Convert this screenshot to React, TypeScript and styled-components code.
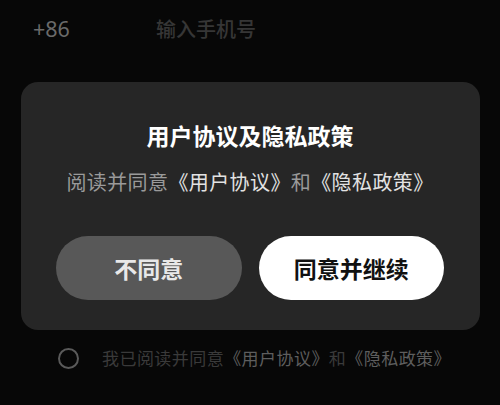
import * as React from 'react';
import styled, { createGlobalStyle } from 'styled-components';

const GlobalStyle = createGlobalStyle`
	html, body {
		margin: 0;
		padding: 0;
		background: #070707;
	}
	body {
		font-family: "Noto Sans CJK SC", "Noto Sans", sans-serif;
	}
`;

const Page = styled.div`
	width: 500px;
	height: 405px;
	background: #070707;
	display: flex;
	flex-direction: column;
	overflow: hidden;
`;

const PhoneRow = styled.div`
	display: flex;
	align-items: center;
	height: 56px;
	padding-left: 33px;
	font-size: 20px;
`;

const AreaCode = styled.span`
	width: 123px;
	color: #6a6a6a;
	font-size: 21.5px;
	font-family: "Noto Sans", sans-serif;
`;

const Placeholder = styled.span`
	color: #363636;
	font-weight: 500;
`;

const Dialog = styled.div`
	margin: 26px 20px 0 21px;
	height: 248px;
	box-sizing: border-box;
	padding: 37px 36px 30px 35px;
	background: #262626;
	border-radius: 17px;
	display: flex;
	flex-direction: column;
	align-items: center;
`;

const Title = styled.div`
	font-size: 23px;
	line-height: 32px;
	font-weight: 700;
	color: #ffffff;
`;

const Subtitle = styled.div`
	margin-top: 17px;
	font-size: 20px;
	line-height: 28px;
	letter-spacing: 0.4px;
	color: #9a9a9a;
`;

const Link = styled.span<{ $dim?: boolean }>`
	color: ${(p) => (p.$dim ? '#5e5e5e' : '#e2e2e2')};
`;

const Buttons = styled.div`
	margin-top: 40px;
	display: flex;
	gap: 17px;
	width: 100%;
`;

const Button = styled.button<{ $primary?: boolean }>`
	flex: 1;
	height: 64px;
	border: none;
	border-radius: 32px;
	font-family: inherit;
	font-size: 23px;
	font-weight: 700;
	background: ${(p) => (p.$primary ? '#ffffff' : '#585858')};
	color: ${(p) => (p.$primary ? '#111111' : '#e8e8e8')};
	cursor: pointer;
`;

const Agreement = styled.div`
	display: flex;
	align-items: center;
	margin-top: 17px;
	padding-left: 58px;
	font-size: 17px;
	line-height: 22px;
	letter-spacing: 0.45px;
	color: #3a3a3a;
`;

const Radio = styled.span`
	width: 17px;
	height: 17px;
	border: 2px solid #5a5a5a;
	border-radius: 50%;
	margin-right: 23px;
`;

export default function App() {
	return (
		<Page>
			<GlobalStyle />
			<PhoneRow>
				<AreaCode>+86</AreaCode>
				<Placeholder>输入手机号</Placeholder>
			</PhoneRow>
			<Dialog>
				<Title>用户协议及隐私政策</Title>
				<Subtitle>
					阅读并同意<Link>《用户协议》</Link>和<Link>《隐私政策》</Link>
				</Subtitle>
				<Buttons>
					<Button>不同意</Button>
					<Button $primary>同意并继续</Button>
				</Buttons>
			</Dialog>
			<Agreement>
				<Radio />
				我已阅读并同意<Link $dim>《用户协议》</Link>和<Link $dim>《隐私政策》</Link>
			</Agreement>
		</Page>
	);
}
